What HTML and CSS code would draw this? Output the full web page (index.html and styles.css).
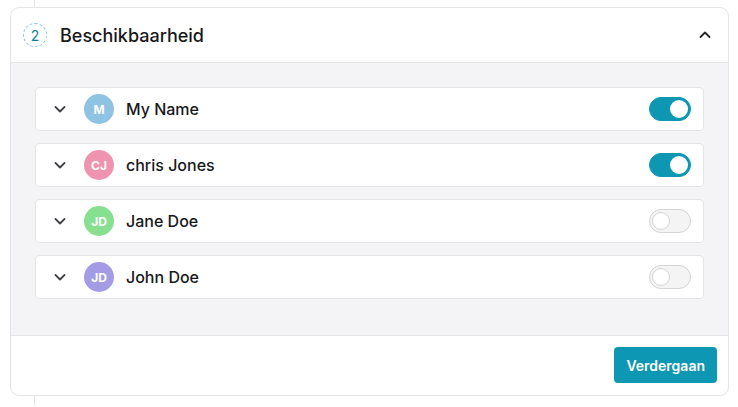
FILE: index.html
```html
<!DOCTYPE html>
<html lang="nl">
<head>
    <meta charset="UTF-8">
    <meta name="viewport" content="width=device-width, initial-scale=1.0">
    <title>Beschikbaarheid</title>
    <link rel="stylesheet" href="styles.css">
</head>
<body>
    <div class="wizard">
        <div class="step-line"></div>

        <section class="step-card">
            <header class="step-header">
                <span class="step-number">2</span>
                <h2 class="step-title">Beschikbaarheid</h2>
                <svg class="step-toggle" width="14" height="14" viewBox="0 0 14 14">
                    <path d="M2.5 9 L7 4.5 L11.5 9" fill="none" stroke="#27272a" stroke-width="1.8" stroke-linecap="round" stroke-linejoin="round"/>
                </svg>
            </header>

            <div class="step-body">
                <div class="member-row">
                    <svg class="member-expand" width="14" height="14" viewBox="0 0 14 14">
                        <path d="M2.5 5 L7 9.5 L11.5 5" fill="none" stroke="#3f3f46" stroke-width="1.8" stroke-linecap="round" stroke-linejoin="round"/>
                    </svg>
                    <span class="avatar avatar-blue">M</span>
                    <span class="member-name">My Name</span>
                    <span class="switch is-on"><span class="switch-knob"></span></span>
                </div>
                <div class="member-row">
                    <svg class="member-expand" width="14" height="14" viewBox="0 0 14 14">
                        <path d="M2.5 5 L7 9.5 L11.5 5" fill="none" stroke="#3f3f46" stroke-width="1.8" stroke-linecap="round" stroke-linejoin="round"/>
                    </svg>
                    <span class="avatar avatar-pink">CJ</span>
                    <span class="member-name">chris Jones</span>
                    <span class="switch is-on"><span class="switch-knob"></span></span>
                </div>
                <div class="member-row">
                    <svg class="member-expand" width="14" height="14" viewBox="0 0 14 14">
                        <path d="M2.5 5 L7 9.5 L11.5 5" fill="none" stroke="#3f3f46" stroke-width="1.8" stroke-linecap="round" stroke-linejoin="round"/>
                    </svg>
                    <span class="avatar avatar-green">JD</span>
                    <span class="member-name">Jane Doe</span>
                    <span class="switch"><span class="switch-knob"></span></span>
                </div>
                <div class="member-row">
                    <svg class="member-expand" width="14" height="14" viewBox="0 0 14 14">
                        <path d="M2.5 5 L7 9.5 L11.5 5" fill="none" stroke="#3f3f46" stroke-width="1.8" stroke-linecap="round" stroke-linejoin="round"/>
                    </svg>
                    <span class="avatar avatar-purple">JD</span>
                    <span class="member-name">John Doe</span>
                    <span class="switch"><span class="switch-knob"></span></span>
                </div>
            </div>

            <footer class="step-footer">
                <button class="btn-primary">Verdergaan</button>
            </footer>
        </section>

        <div class="step-line"></div>
    </div>
</body>
</html>
```

FILE: styles.css
```css
body {
    margin: 0;
    font-family: 'Inter', 'Noto Sans', sans-serif;
    color: #18181b;
    background: #fff;
}
.wizard {
    display: flex;
    flex-direction: column;
    padding: 0 9px 0 10px;
}
.step-line {
    height: 7px;
    margin-left: 24px;
    border-left: 1px solid #e4e4e7;
}
.step-line:last-child {
    height: 10px;
}
.step-card {
    border: 1px solid #e4e4e7;
    border-radius: 9px;
    overflow: hidden;
    background: #fff;
}
.step-header {
    display: flex;
    align-items: center;
    height: 54px;
    padding: 0 16px 0 12px;
}
.step-number {
    width: 22px;
    height: 22px;
    border: 1px dashed #7fcfe0;
    border-radius: 50%;
    display: flex;
    align-items: center;
    justify-content: center;
    font-size: 14px;
    color: #0e7f99;
    margin-right: 13px;
}
.step-title {
    flex: 1;
    margin: 0;
    font-size: 18px;
    font-weight: 500;
    color: #18181b;
}
.step-toggle {
    display: block;
}
.step-body {
    background: #f4f4f6;
    border-top: 1px solid #e4e4e7;
    border-bottom: 1px solid #e4e4e7;
    padding: 24px 24px 36px 24px;
    display: flex;
    flex-direction: column;
    gap: 12px;
}
.member-row {
    display: flex;
    align-items: center;
    height: 42px;
    background: #fff;
    border: 1px solid #e4e4e7;
    border-radius: 4px;
    padding: 0 12px 0 17px;
}
.member-expand {
    display: block;
    margin-right: 17px;
}
.avatar {
    width: 30px;
    height: 30px;
    border-radius: 50%;
    display: flex;
    align-items: center;
    justify-content: center;
    color: #fff;
    font-size: 12px;
    font-weight: 700;
    margin-right: 12px;
}
.avatar-blue { background: #8ec3e3; }
.avatar-pink { background: #ee93b0; }
.avatar-green { background: #86e08f; }
.avatar-purple { background: #a49be5; }
.member-name {
    flex: 1;
    font-size: 16px;
    font-weight: 500;
    color: #18181b;
}
.switch {
    width: 42px;
    height: 24px;
    border-radius: 12px;
    box-sizing: border-box;
    border: 1px solid #d4d4d8;
    background: #f4f4f5;
    padding: 2px;
    display: flex;
}
.switch-knob {
    width: 18px;
    height: 18px;
    border-radius: 50%;
    background: #fff;
    border: 1px solid #d4d4d8;
    box-sizing: border-box;
}
.switch.is-on {
    background: #0e97b2;
    border-color: #0e97b2;
    justify-content: flex-end;
}
.switch.is-on .switch-knob {
    border: none;
}
.step-footer {
    display: flex;
    justify-content: flex-end;
    padding: 11px 11px 12px;
}
.btn-primary {
    height: 36px;
    padding: 0 12px;
    background: #0e97b2;
    color: #fff;
    border: none;
    border-radius: 4px;
    font-family: inherit;
    font-size: 14px;
    font-weight: 600;
    cursor: pointer;
}
```
